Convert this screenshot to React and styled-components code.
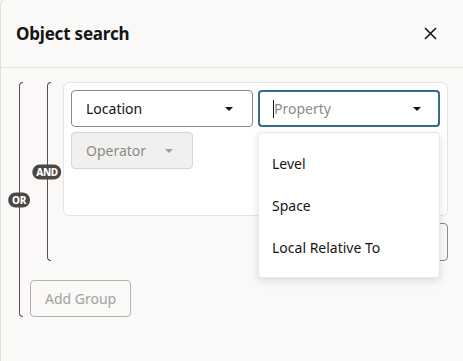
import React from "react";
import styled, { createGlobalStyle } from "styled-components";

const Global = createGlobalStyle`
  html, body { margin: 0; padding: 0; overflow: hidden; background: #faf9f8; }
  body { font-family: "Noto Sans", "Open Sans", sans-serif; color: #161513; }
  * { box-sizing: border-box; }
`;

const Dialog = styled.div`
  width: 463px;
  height: 380px;
  background: #faf9f8;
  border: 1px solid #e2e0dc;
  border-right: none;
  border-top-left-radius: 6px;
  margin-top: -1px;
`;

const Header = styled.div`
  height: 68px;
  display: flex;
  align-items: center;
  justify-content: space-between;
  padding: 0 17px 0 15px;
  border-bottom: 1px solid #e2e0dc;
`;

const Title = styled.h1`
  margin: 0;
  font-size: 17px;
  font-weight: 700;
  letter-spacing: -0.2px;
`;

const CloseButton = styled.button`
  width: 32px;
  height: 32px;
  border: none;
  background: transparent;
  display: flex;
  align-items: center;
  justify-content: center;
  padding: 0;
  color: #161513;
`;

const Body = styled.div`
  padding: 14px 15px 0 18px;
`;

const Group = styled.div`
  display: flex;
  align-items: stretch;
  padding-left: ${(p) => p.$indent || 0}px;
`;

const Bracket = styled.div`
  position: relative;
  flex: 0 0 4px;
  border-left: 1px solid #55524f;
  border-top: 1px solid #55524f;
  border-bottom: 1px solid #55524f;
  border-top-left-radius: 5px;
  border-bottom-left-radius: 5px;
  margin-right: ${(p) => p.$gap}px;
`;

const Badge = styled.span`
  position: absolute;
  top: 50%;
  left: -1px;
  transform: translate(-50%, -50%);
  background: #4a4744;
  color: #fff;
  font-family: "Noto Sans", sans-serif;
  font-size: 10px;
  font-weight: 800;
  line-height: 15px;
  height: 15px;
  padding: 0 ${(p) => p.$pad}px;
  border-radius: 8px;
  letter-spacing: -0.4px;
`;

const Column = styled.div`
  flex: 1;
  display: flex;
  flex-direction: column;
  align-items: stretch;
`;

const Card = styled.div`
  background: #fff;
  border: 1px solid #e6e4e0;
  border-radius: 6px;
  padding: 7px 7px 46px;
  display: grid;
  grid-template-columns: 1fr 1fr;
  column-gap: 5px;
  row-gap: 5px;
`;

const Select = styled.div`
  position: relative;
  height: 37px;
  display: flex;
  align-items: center;
  justify-content: space-between;
  padding: 0 ${(p) => (p.$focused ? 17 : p.$disabled ? 19 : 19)}px 0 ${(p) => (p.$focused ? 13 : 14)}px;
  border: ${(p) => (p.$focused ? "2px solid #2f6e8d" : p.$disabled ? "1px solid #d8d6d2" : "1px solid #8c8a87")};
  background: ${(p) => (p.$disabled ? "#f1f0ee" : "#fff")};
  border-radius: 4px;
  font-size: 14px;
  color: ${(p) => (p.$disabled ? "#8d8b88" : "#161513")};
`;

const Placeholder = styled.span`
  color: #8d8b88;
  display: flex;
  align-items: center;
`;

const Cursor = styled.span`
  display: inline-block;
  width: 1px;
  height: 18px;
  background: #161513;
`;

const Caret = styled.span`
  width: 0;
  height: 0;
  border-left: 4px solid transparent;
  border-right: 4px solid transparent;
  border-top: 4.5px solid ${(p) => (p.$muted ? "#a09e9b" : "#161513")};
`;

const Menu = styled.ul`
  position: absolute;
  top: 40px;
  left: -2px;
  right: -2px;
  margin: 0;
  padding: 9px 0 9px;
  list-style: none;
  background: #fff;
  border-radius: 4px;
  border: 1px solid #ebe9e6;
  box-shadow: 0 3px 8px rgba(0, 0, 0, 0.12);
  z-index: 5;
`;

const MenuItem = styled.li`
  height: 42px;
  display: flex;
  align-items: center;
  padding-left: 13px;
  font-size: 14px;
  color: #161513;
`;

const ButtonRow = styled.div`
  display: flex;
  justify-content: flex-end;
  margin-top: 7px;
`;

const OutlineButton = styled.button`
  height: ${(p) => p.$h}px;
  min-width: ${(p) => p.$w || 0}px;
  padding: 0 14px;
  border: 1px solid ${(p) => (p.$disabled ? "#b3b1ad" : "#8c8a87")};
  border-radius: 4px;
  background: transparent;
  font-family: "Noto Sans", sans-serif;
  font-size: 14px;
  color: ${(p) => (p.$disabled ? "#a3a19e" : "#161513")};
`;

const AddGroupRow = styled.div`
  display: flex;
  margin-top: 19px;
`;

export default function App() {
  return (
    <>
      <Global />
      <Dialog>
        <Header>
          <Title>Object search</Title>
          <CloseButton aria-label="Close">
            <svg width="13" height="13" viewBox="0 0 13 13">
              <path d="M1 1L12 12M12 1L1 12" stroke="#161513" strokeWidth="1.6" />
            </svg>
          </CloseButton>
        </Header>
        <Body>
          <Group>
            <Bracket $gap={7}>
              <Badge $pad={4}>OR</Badge>
            </Bracket>
            <Column>
              <Group $indent={17}>
                <Bracket $gap={12}>
                  <Badge $pad={4}>AND</Badge>
                </Bracket>
                <Column>
                  <Card>
                    <Select>
                      Location
                      <Caret />
                    </Select>
                    <Select $focused>
                      <Placeholder>
                        <Cursor />
                        Property
                      </Placeholder>
                      <Caret />
                      <Menu>
                        <MenuItem>Level</MenuItem>
                        <MenuItem>Space</MenuItem>
                        <MenuItem>Local Relative To</MenuItem>
                      </Menu>
                    </Select>
                    <Select $disabled style={{ width: 122 }}>
                      Operator
                      <Caret $muted />
                    </Select>
                  </Card>
                  <ButtonRow>
                    <OutlineButton $h={38} $w={120} aria-label="Add Condition" />
                  </ButtonRow>
                </Column>
              </Group>
              <AddGroupRow>
                <OutlineButton $h={37} $disabled>Add Group</OutlineButton>
              </AddGroupRow>
            </Column>
          </Group>
        </Body>
      </Dialog>
    </>
  );
}
